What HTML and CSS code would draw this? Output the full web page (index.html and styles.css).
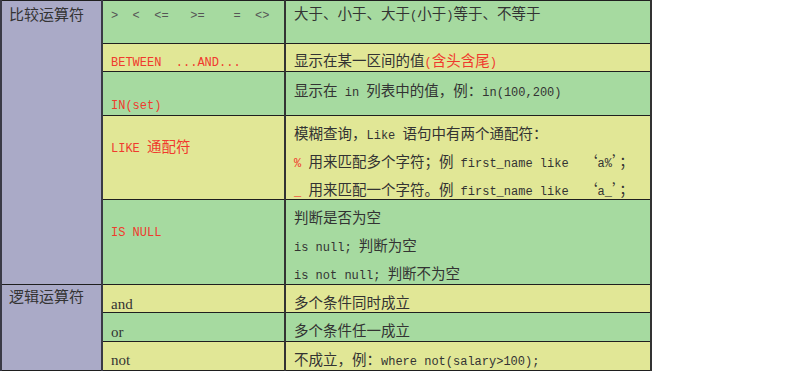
FILE: index.html
```html
<!DOCTYPE html>
<html lang="zh">
<head>
<meta charset="utf-8">
<link rel="stylesheet" href="styles.css">
</head>
<body>
<table class="ops">
  <colgroup>
    <col class="w1"><col class="w2"><col class="w3">
  </colgroup>
  <tr class="r1">
    <td class="cat" rowspan="5"><div class="cat-t1">比较运算符</div></td>
    <td class="green sym"><span class="m gray">&gt;  &lt;  &lt;=   &gt;=    =  &lt;&gt;</span></td>
    <td class="green desc p3">大于、小于、大于<span class="m">(</span>小于<span class="m">)</span>等于、不等于</td>
  </tr>
  <tr class="r2">
    <td class="yellow p7"><span class="m red">BETWEEN  ...AND...</span></td>
    <td class="yellow desc p7">显示在某一区间的值<span class="red"><span class="m">(</span>含头含尾<span class="m">)</span></span></td>
  </tr>
  <tr class="r3">
    <td class="green p22"><span class="m red">IN(set)</span></td>
    <td class="green desc p9">显示在<span class="m"> in </span>列表中的值，例：<span class="m">in(100,200)</span></td>
  </tr>
  <tr class="r4">
    <td class="yellow p21"><span class="red"><span class="m">LIKE </span>通配符</span></td>
    <td class="yellow desc multi">
      <div>模糊查询，<span class="m">Like </span>语句中有两个通配符：</div>
      <div><span class="m red">% </span>用来匹配多个字符；例<span class="m"> first_name like  </span>‘<span class="m">a%</span>’；</div>
      <div><span class="m red">_ </span>用来匹配一个字符。例<span class="m"> first_name like  </span>‘<span class="m">a_</span>’；</div>
    </td>
  </tr>
  <tr class="r5">
    <td class="green p21"><span class="m red">IS NULL</span></td>
    <td class="green desc multi">
      <div>判断是否为空</div>
      <div><span class="m">is null; </span>判断为空</div>
      <div><span class="m">is not null; </span>判断不为空</div>
    </td>
  </tr>
  <tr class="r6">
    <td class="cat" rowspan="3"><div class="cat-t2">逻辑运算符</div></td>
    <td class="yellow p9"><span class="word">and</span></td>
    <td class="yellow desc p8">多个条件同时成立</td>
  </tr>
  <tr class="r7">
    <td class="green p9"><span class="word">or</span></td>
    <td class="green desc p8">多个条件任一成立</td>
  </tr>
  <tr class="r8">
    <td class="yellow p8"><span class="word">not</span></td>
    <td class="yellow desc p8">不成立，例：<span class="m">where not(salary&gt;100);</span></td>
  </tr>
</table>
</body>
</html>
```
FILE: styles.css
```css
html, body {
  margin: 0;
  padding: 0;
  background: #ffffff;
}

body {
  font-family: "Noto Sans CJK SC", "Noto Sans", sans-serif;
  color: #333333;
}

.ops {
  border-collapse: collapse;
  table-layout: fixed;
  width: 650px;
}

.w1 { width: 101px; }
.w2 { width: 183px; }
.w3 { width: 366px; }

.ops td {
  border: 1px solid #1f1f1f;
  padding: 0 8px;
  vertical-align: top;
  font-size: 14.5px;
  line-height: 18px;
  white-space: nowrap;
}

.ops td.cat {
  background: #aaaac7;
  border-right: 2px solid #3a3a46;
  border-left: 2px solid #3a3a46;
  padding: 0 7px;
  font-size: 15px;
}

.ops td.desc {
  border-left: 2px solid #333333;
  border-right: 2px solid #333333;
}

.cat-t1 { padding-top: 4px; }
.cat-t2 { padding-top: 2px; }

.green { background: #a6daa0; }
.yellow { background: #e1e796; }

.r1 { height: 43px; }
.r2 { height: 28px; }
.r3 { height: 44px; }
.r4 { height: 84px; }
.r5 { height: 85px; }
.r6 { height: 28px; }
.r7 { height: 29px; }
.r8 { height: 29px; }

.ops td.sym { padding-top: 3px; }
.ops td.p3 { padding-top: 3px; }
.ops td.p7 { padding-top: 7px; }
.ops td.p8 { padding-top: 8px; }
.ops td.p9 { padding-top: 9px; }
.ops td.p21 { padding-top: 21px; }
.ops td.p22 { padding-top: 22px; }

.ops td.multi {
  padding-top: 8px;
}

.ops td.multi div + div {
  margin-top: 10px;
}

.m {
  font-family: "Liberation Mono", monospace;
  font-size: 12px;
  line-height: 1;
  white-space: pre;
}

.gray { color: #555555; }
.red { color: #f03a2e; }

.word {
  font-family: "Liberation Serif", serif;
  font-size: 15px;
  line-height: 1;
}
```
